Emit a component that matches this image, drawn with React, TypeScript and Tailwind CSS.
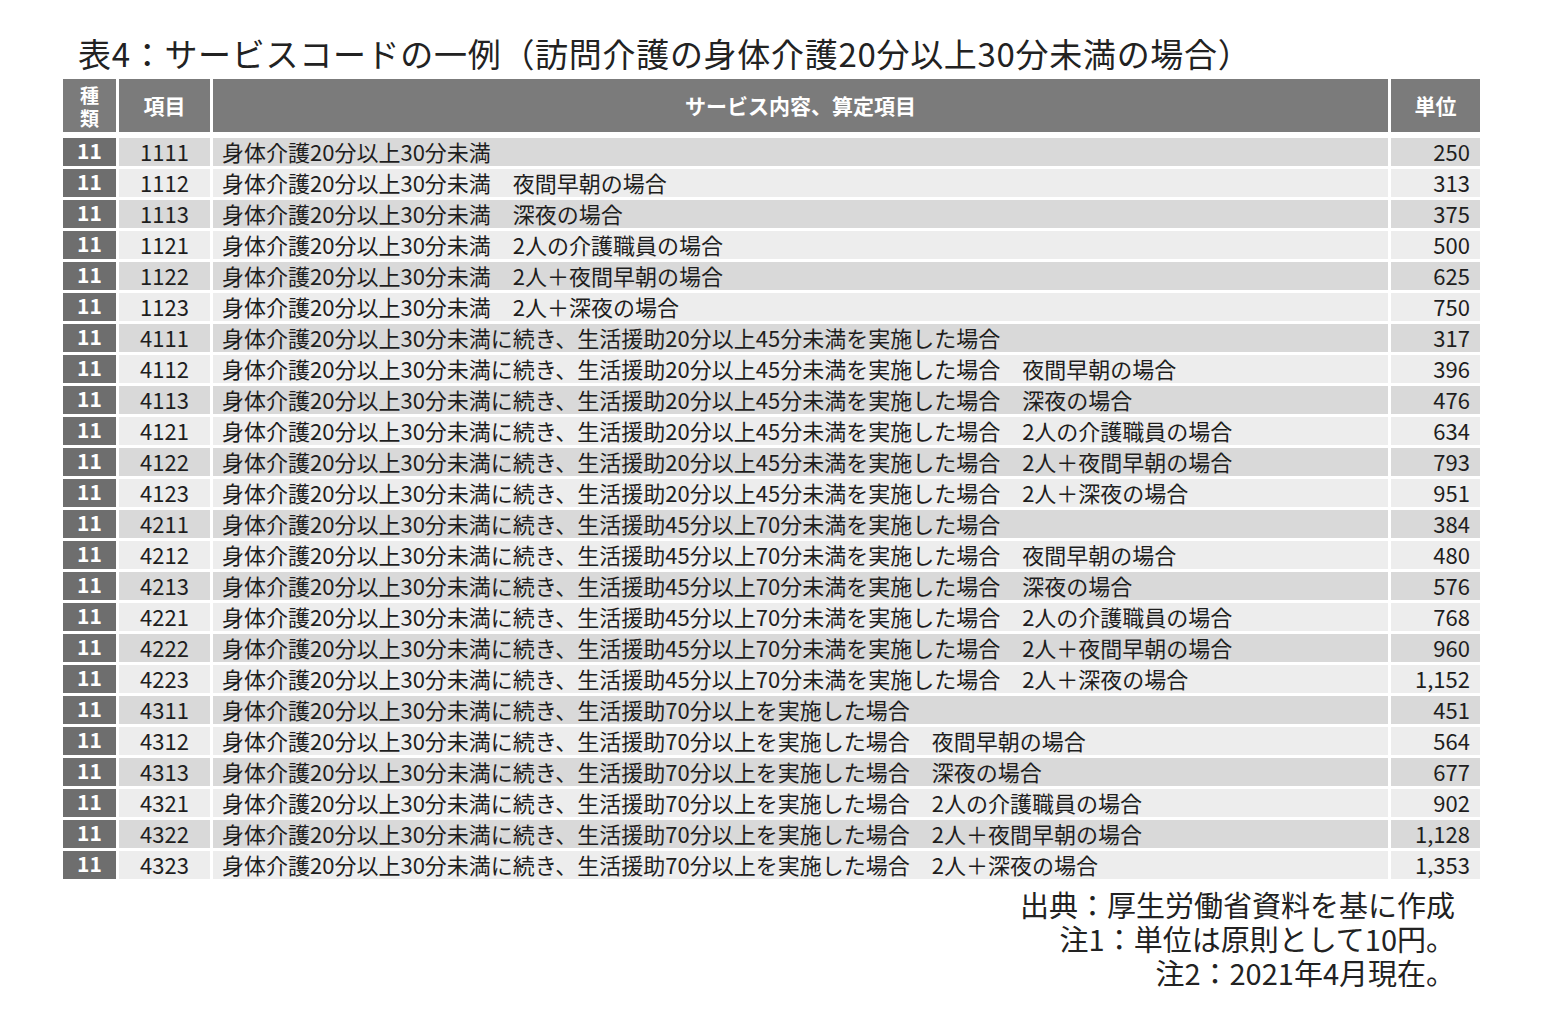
import React from 'react';

const BASE = '身体介護20分以上30分未満';
const A = BASE + 'に続き、生活援助20分以上45分未満を実施した場合';
const B = BASE + 'に続き、生活援助45分以上70分未満を実施した場合';
const C = BASE + 'に続き、生活援助70分以上を実施した場合';

const SUFFIXES = ['', '　夜間早朝の場合', '　深夜の場合', '　2人の介護職員の場合', '　2人＋夜間早朝の場合', '　2人＋深夜の場合'];

const rows: [string, string, string][] = [
  ['1111', BASE + SUFFIXES[0], '250'],
  ['1112', BASE + SUFFIXES[1], '313'],
  ['1113', BASE + SUFFIXES[2], '375'],
  ['1121', BASE + SUFFIXES[3], '500'],
  ['1122', BASE + SUFFIXES[4], '625'],
  ['1123', BASE + SUFFIXES[5], '750'],
  ['4111', A + SUFFIXES[0], '317'],
  ['4112', A + SUFFIXES[1], '396'],
  ['4113', A + SUFFIXES[2], '476'],
  ['4121', A + SUFFIXES[3], '634'],
  ['4122', A + SUFFIXES[4], '793'],
  ['4123', A + SUFFIXES[5], '951'],
  ['4211', B + SUFFIXES[0], '384'],
  ['4212', B + SUFFIXES[1], '480'],
  ['4213', B + SUFFIXES[2], '576'],
  ['4221', B + SUFFIXES[3], '768'],
  ['4222', B + SUFFIXES[4], '960'],
  ['4223', B + SUFFIXES[5], '1,152'],
  ['4311', C + SUFFIXES[0], '451'],
  ['4312', C + SUFFIXES[1], '564'],
  ['4313', C + SUFFIXES[2], '677'],
  ['4321', C + SUFFIXES[3], '902'],
  ['4322', C + SUFFIXES[4], '1,128'],
  ['4323', C + SUFFIXES[5], '1,353'],
];

const FONT = "font-['Noto_Sans_CJK_JP','Noto_Sans',sans-serif]";

export default function App() {
  return (
    <div className={`w-[1547px] h-[1012px] bg-white text-[#1e1e1e] ${FONT}`}>
      <div className="pl-[63px] pr-[67px] pt-[33px]">
        {/* Title */}
        <h1 className="pl-[15px] h-[40px] text-[33px] leading-[40px] font-normal tracking-[0.7px] text-[#222] [text-spacing-trim:space-all]">
          表4：サービスコードの一例（訪問介護の身体介護20分以上30分未満の場合）
        </h1>

        {/* Header */}
        <div className="mt-[6px] grid grid-cols-[53px_91px_1175px_89px] grid-rows-[53px] gap-x-[3px] text-white font-bold">
          <div className="bg-[#7b7b7b] text-[19px] leading-none flex flex-col items-center justify-center gap-[4px]">
            <span>種</span>
            <span>類</span>
          </div>
          <div className="bg-[#7b7b7b] text-[21px] leading-none flex items-center justify-center">項目</div>
          <div className="bg-[#7b7b7b] text-[21px] leading-none flex items-center justify-center">
            サービス内容、算定項目
          </div>
          <div className="bg-[#7b7b7b] text-[21px] leading-none flex items-center justify-center">単位</div>
        </div>

        {/* Body */}
        <div className="mt-[6px] flex flex-col gap-y-[3px]">
          {rows.map(([code, label, unit], i) => {
            const stripe = i % 2 === 0 ? 'bg-[#d9d9d9]' : 'bg-[#ededed]';
            return (
              <div
                key={code}
                className="grid grid-cols-[53px_91px_1175px_89px] grid-rows-[28px] gap-x-[3px] text-[22px] leading-none"
              >
                <div className="bg-[#6e6e6e] text-white font-bold text-[21px] flex items-center justify-center pb-[3px]">
                  11
                </div>
                <div className={`${stripe} flex items-center justify-center pb-[3px]`}>{code}</div>
                <div className={`${stripe} flex items-center pl-[9px] pb-[3px] whitespace-pre`}>{label}</div>
                <div className={`${stripe} flex items-center justify-end pr-[10px] pb-[3px]`}>{unit}</div>
              </div>
            );
          })}
        </div>

        {/* Notes */}
        <div className="mt-[8px] pr-[25px] flex flex-col items-end text-[29px] leading-none text-[#222]">
          <p className="h-[34px] flex items-center">出典：厚生労働省資料を基に作成</p>
          <p className="h-[34px] flex items-center">注1：単位は原則として10円。</p>
          <p className="h-[34px] flex items-center">注2：2021年4月現在。</p>
        </div>
      </div>
    </div>
  );
}
